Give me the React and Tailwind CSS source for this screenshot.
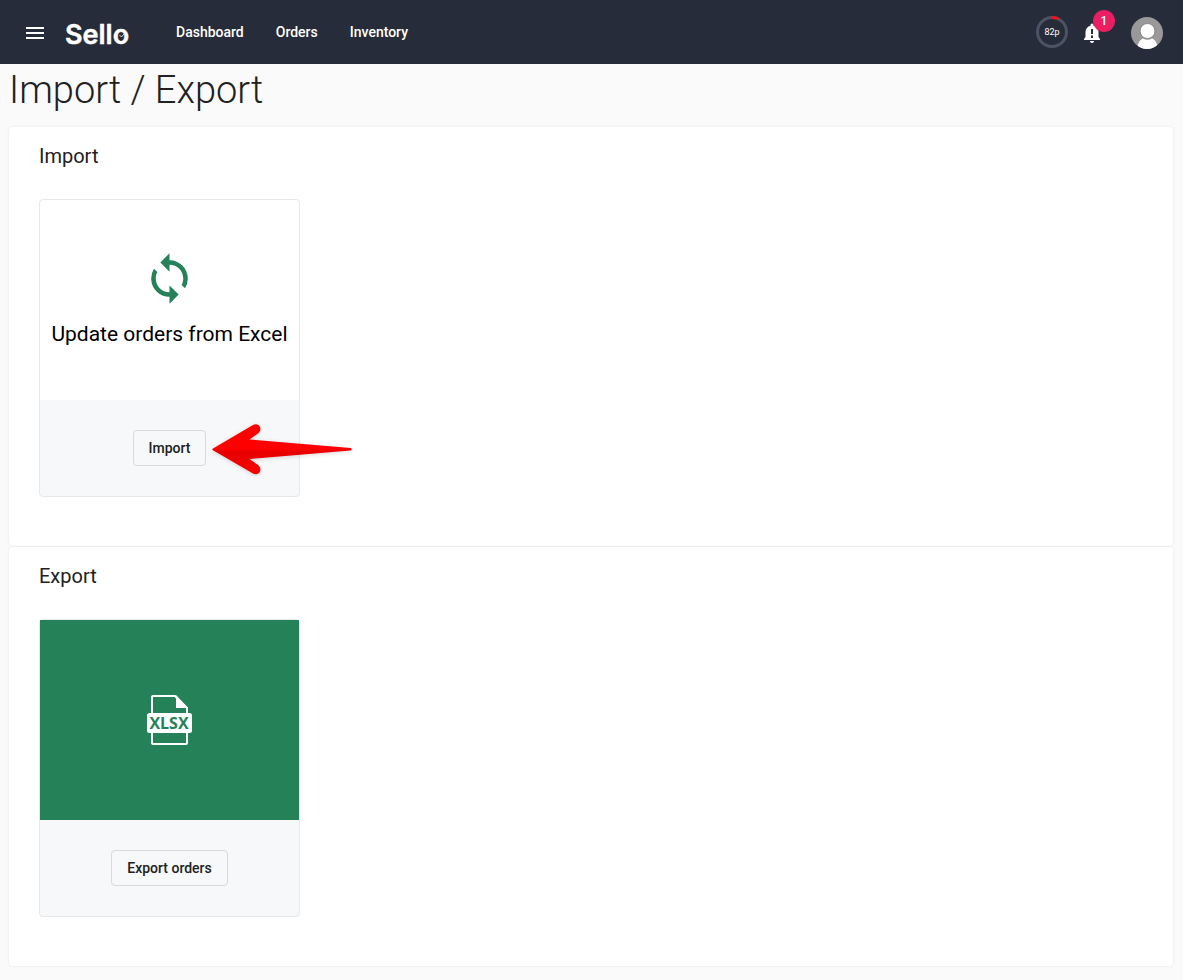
import { MdMenu, MdSync } from "react-icons/md";

const navLinks = ["Dashboard", "Orders", "Inventory"];

function Logo() {
  return (
    <a href="#home" aria-label="Sello" className="ml-[17px] block">
      <svg width="72" height="40" viewBox="0 0 72 40" fill="none">
        <text
          x="1"
          y="32"
          fill="#fff"
          stroke="#fff"
          strokeWidth="0.500"
          strokeLinejoin="round"
          fontSize="27"
          fontWeight="600"
          fontFamily="Inter, sans-serif"
        >
          Sello
        </text>
        <path d="M55.500 23l2 2 2.500-3" stroke="#fff" strokeWidth="0.800" />
      </svg>
    </a>
  );
}

function CreditRing() {
  return (
    <div className="relative flex h-8 w-8 items-center justify-center">
      <svg className="absolute inset-0" width="32" height="32" viewBox="0 0 32 32" fill="none">
        <circle cx="16" cy="16" r="14.5" stroke="#4d5364" strokeWidth="3" />
        <path d="M15.500 1.500a14.500 14.500 0 0 1 7 1.500" stroke="#f5101c" strokeWidth="3" />
      </svg>
      <span className="relative text-[9px] leading-none text-white">82p</span>
    </div>
  );
}

function Notifications() {
  return (
    <button type="button" aria-label="Notifications" className="relative mt-0.5 ml-3 h-6 w-6">
      <svg width="24" height="24" viewBox="0 0 24 24" fill="#fff">
        <path d="M18.500 16v-5c0-3.100-2-5.700-5-6.300V4a1.500 1.500 0 0 0-3 0v.7c-3 .6-5 3.200-5 6.300v5L4 18v1h16v-1l-1.500-2zM13 17h-2v-2.500h2V17zm0-4h-2V8h2v5zm-1 9a2 2 0 0 0 2-2h-4a2 2 0 0 0 2 2z" />
      </svg>
      <span className="absolute -top-[11px] left-[13px] flex h-[22px] w-[22px] items-center justify-center rounded-full bg-[#e91e63] text-xs font-medium text-white">
        1
      </span>
    </button>
  );
}

function Avatar() {
  return (
    <button type="button" aria-label="Account" className="mt-0.5 ml-[27px] h-8 w-8 overflow-hidden rounded-full">
      <svg width="32" height="32" viewBox="0 0 32 32">
        <rect width="32" height="32" fill="#999" />
        <path d="M6.500 32c0-6 2.500-9.500 5.500-10.500 3 1.700 6 1.700 9 0 3 1 5.500 4.500 5.500 10.500z" fill="#fff" />
        <circle cx="16.500" cy="14" r="7.500" fill="#fff" stroke="#858585" strokeWidth="1" />
      </svg>
    </button>
  );
}

function Header() {
  return (
    <header className="flex h-16 items-center bg-[#272c3a] pr-5 pl-[23px]">
      <button type="button" aria-label="Menu" className="mt-0.5 text-white">
        <MdMenu size={24} />
      </button>
      <Logo />
      <nav className="ml-10 flex gap-8 text-sm font-medium text-white">
        {navLinks.map((link) => (
          <a key={link} href={`#${link.toLowerCase()}`}>
            {link}
          </a>
        ))}
      </nav>
      <div className="ml-auto flex items-center">
        <CreditRing />
        <Notifications />
        <Avatar />
      </div>
    </header>
  );
}

function XlsxIcon() {
  return (
    <svg width="45" height="50" viewBox="0 0 45 50">
      <path
        d="M6 1h22l12 12v35a1 1 0 0 1-1 1H6a1 1 0 0 1-1-1V2a1 1 0 0 1 1-1z"
        fill="none"
        stroke="#fff"
        strokeWidth="2"
      />
      <path d="M29 0l12 13H29z" fill="#fff" />
      <rect y="18" width="45" height="20" rx="2.500" fill="#fff" />
      <text
        x="22"
        y="34"
        textAnchor="middle"
        fill="#258158"
        fontSize="16"
        fontWeight="700"
        fontFamily='"Open Sans", sans-serif'
      >
        XLSX
      </text>
    </svg>
  );
}

function Arrow() {
  return (
    <svg
      className="pointer-events-none absolute top-1/2 left-full ml-1.5 -translate-y-1/2"
      width="144"
      height="56"
      viewBox="0 0 144 56"
      aria-hidden="true"
    >
      <defs>
        <linearGradient id="arrow" x1="0" y1="0" x2="0" y2="1">
          <stop offset="0" stopColor="#ff0000" />
          <stop offset="0.480" stopColor="#ff0000" />
          <stop offset="0.560" stopColor="#e60000" />
          <stop offset="0.750" stopColor="#f00000" />
          <stop offset="1" stopColor="#ff0000" />
        </linearGradient>
      </defs>
      <path
        d="M.5 30Q0 29 1 28.500L41 5c3-1.500 6-.5 7 2 1 2.500 0 5-2 6.500L37.500 19.500l101 8.400c1.500.3 1.500 2.500 0 2.700L37.500 39l8.500 6c2 1.500 3 4 2 6.500s-4 3.500-7 2z"
        fill="url(#arrow)"
        className="drop-shadow-sm"
      />
    </svg>
  );
}

function Panel({ title, children }) {
  return (
    <section className="rounded bg-white px-[30px] pt-[15px] pb-[49px] shadow-[0_0_3px_rgba(0,0,0,0.08)]">
      <h2 className="text-xl leading-7 text-[#212121]">{title}</h2>
      <div className="mt-[29px] flex">{children}</div>
    </section>
  );
}

function ActionCard({ action, filled, pointer, children }) {
  return (
    <article className="w-[261px] rounded border border-[#e4e8ef] bg-[#f6f8fa]">
      <div
        className={`flex h-[200px] flex-col items-center justify-center ${
          filled ? "bg-[#258158]" : "rounded-t bg-white"
        }`}
      >
        {children}
      </div>
      <div className="flex h-24 items-center justify-center">
        <div className="relative">
          <button
            type="button"
            className="h-9 rounded border border-[#d8dadd] px-[15px] text-sm font-medium text-[#212121]"
          >
            {action}
          </button>
          {pointer && <Arrow />}
        </div>
      </div>
    </article>
  );
}

export default function App() {
  return (
    <div className="min-h-screen bg-[#fafafa] font-[Roboto,sans-serif]">
      <Header />
      <main className="pr-2.5 pb-3.5 pl-[9px]">
        <h1 className="pb-2.5 text-[38px] leading-[53px] font-light text-[#212121]">
          Import / Export
        </h1>
        <div className="flex flex-col gap-px">
          <Panel title="Import">
            <ActionCard action="Import" pointer>
              <MdSync size={55} className="text-[#258158]" />
              <h3 className="mt-3 text-[21px] leading-8 whitespace-nowrap text-black">
                Update orders from Excel
              </h3>
            </ActionCard>
          </Panel>
          <Panel title="Export">
            <ActionCard action="Export orders" filled>
              <XlsxIcon />
            </ActionCard>
          </Panel>
        </div>
      </main>
    </div>
  );
}
